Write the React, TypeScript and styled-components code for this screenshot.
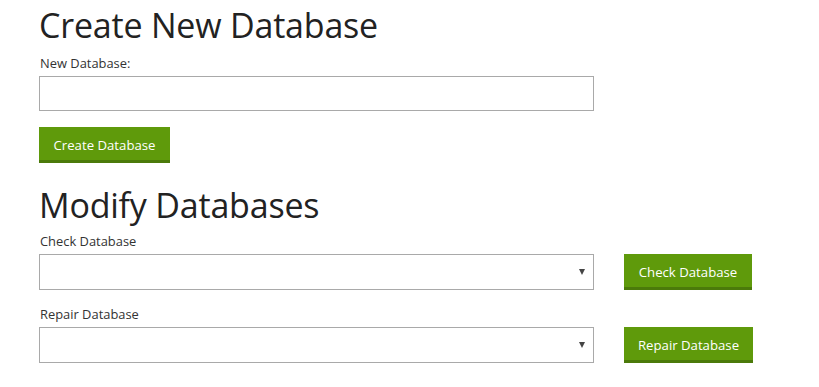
import React from "react";
import styled, { createGlobalStyle } from "styled-components";

const Global = createGlobalStyle`
  html, body { margin: 0; padding: 0; background: #fff; }
  body { font-family: "Open Sans", "Noto Sans", sans-serif; color: #333; }
`;

const Page = styled.div`
  padding: 0 39px;
  display: flex;
  flex-direction: column;
`;

const Heading = styled.h1<{ $top: number }>`
  margin: ${(p) => p.$top}px 0 0 0;
  font-size: 34px;
  font-weight: 400;
  line-height: 44px;
  color: #222;
  letter-spacing: -0.2px;
`;

const Label = styled.label<{ $top?: number }>`
  display: block;
  font-size: 12.9px;
  line-height: 17px;
  color: #333;
  margin: ${(p) => p.$top ?? 8}px 0 4px 1px;
`;

const TextInput = styled.input`
  box-sizing: border-box;
  width: 555px;
  height: 35px;
  border: 1px solid #a9a9a9;
  background: #fff;
  padding: 0 8px;
  outline: none;
  font-family: inherit;
`;

const Button = styled.button<{ $w: number }>`
  box-sizing: border-box;
  width: ${(p) => p.$w}px;
  height: 36px;
  background: #5f9a0b;
  border: none;
  border-bottom: 3px solid #4b7a0a;
  color: #fff;
  font-family: inherit;
  font-size: 13.2px;
  padding: 3px 0 0 0;
  cursor: pointer;
`;

const CreateRow = styled.div`
  margin-top: 16px;
`;

const Row = styled.div`
  display: flex;
  align-items: flex-end;
  gap: 30px;
  margin-bottom: 10px;
`;

const Field = styled.div`
  display: flex;
  flex-direction: column;
`;

const SelectBox = styled.div`
  box-sizing: border-box;
  width: 555px;
  height: 36px;
  border: 1px solid #a9a9a9;
  background: #fff;
  display: flex;
  align-items: center;
  justify-content: flex-end;
  padding-right: 8px;
`;

const Arrow = styled.span`
  width: 0;
  height: 0;
  border-left: 3.5px solid transparent;
  border-right: 3.5px solid transparent;
  border-top: 6px solid #444;
`;

export default function App() {
  return (
    <>
      <Global />
      <Page>
        <Heading $top={3}>Create New Database</Heading>
        <Label>New Database:</Label>
        <TextInput />
        <CreateRow>
          <Button $w={131}>Create Database</Button>
        </CreateRow>
        <Heading $top={20}>Modify Databases</Heading>
        <Row>
          <Field>
            <Label $top={6}>Check Database</Label>
            <SelectBox>
              <Arrow />
            </SelectBox>
          </Field>
          <Button $w={128}>Check Database</Button>
        </Row>
        <Row>
          <Field>
            <Label $top={6}>Repair Database</Label>
            <SelectBox>
              <Arrow />
            </SelectBox>
          </Field>
          <Button $w={129}>Repair Database</Button>
        </Row>
      </Page>
    </>
  );
}
